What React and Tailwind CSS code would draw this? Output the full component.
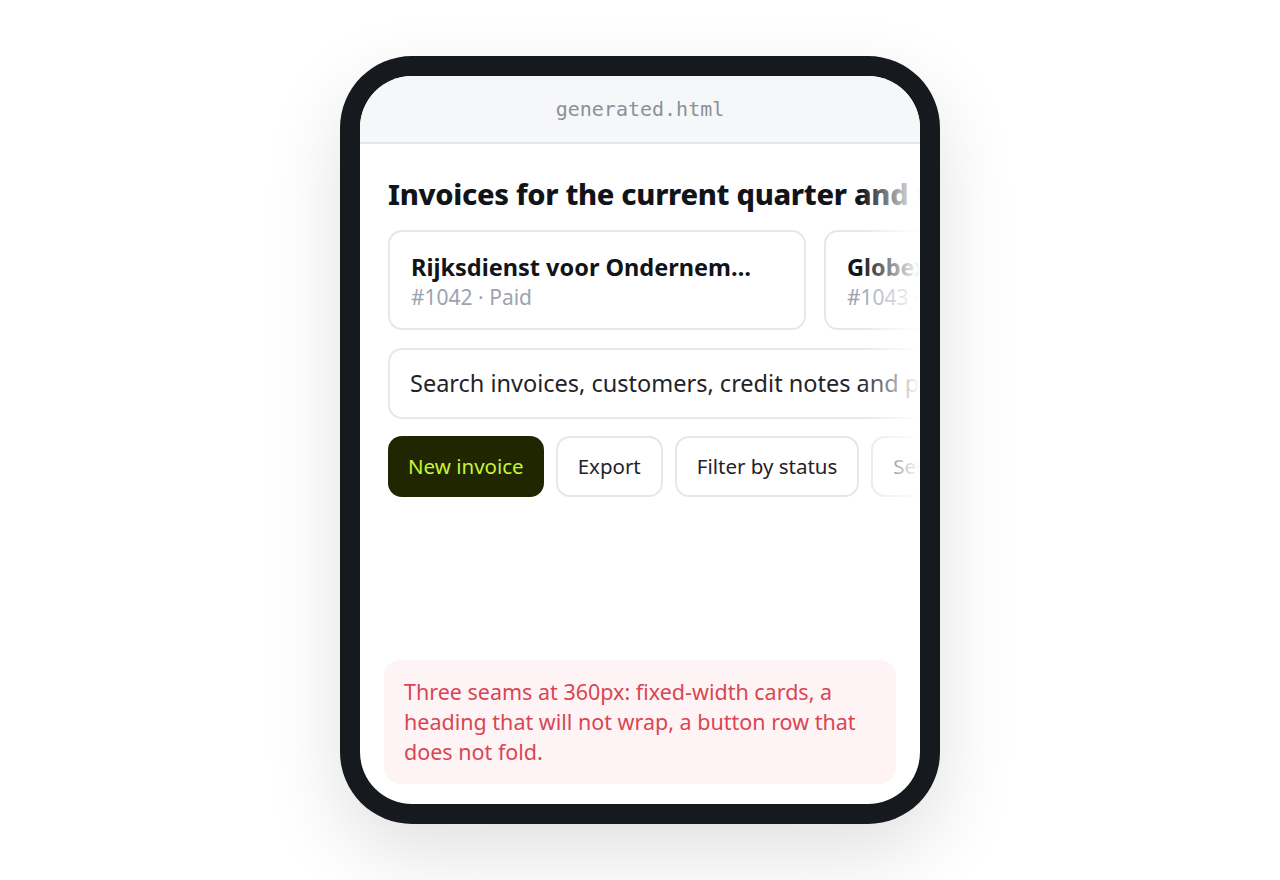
import React from "react";

const invoices = [
  { id: 1042, name: "Rijksdienst voor Ondernemend Nederland", status: "Paid" },
  { id: 1043, name: "Globex Corporation", status: "Open" },
  { id: 1044, name: "Initech B.V.", status: "Overdue" },
];

const actions = ["Export", "Filter by status", "Send reminders", "Archive"];

export default function App() {
  return (
    <div
      className="w-full h-[880px] bg-white flex items-center justify-center"
      style={{ fontFamily: '"Noto Sans", "Open Sans", sans-serif' }}
    >
      {/* phone frame */}
      <div className="w-[600px] h-[768px] rounded-[72px] bg-[#16191e] p-5 shadow-[0_30px_80px_rgba(0,0,0,0.12)]">
        <div className="w-full h-full rounded-[52px] bg-white overflow-hidden flex flex-col">
          {/* address bar */}
          <div className="h-[68px] shrink-0 bg-[#f6f7f9] border-b-2 border-[#e5e7eb] flex items-center justify-center">
            <span
              className="text-[20px] text-[#8b9099]"
              style={{ fontFamily: '"DejaVu Sans Mono", "Liberation Mono", monospace' }}
            >
              generated.html
            </span>
          </div>

          {/* page */}
          <div className="relative flex-1 flex flex-col overflow-hidden">
            <div className="pl-7 pt-[31px] flex flex-col">
              <h1 className="text-[29px] font-extrabold text-[#111418] whitespace-nowrap leading-[38px] tracking-[-0.3px]">
                Invoices for the current quarter and the previous fiscal year
              </h1>

              <div className="mt-[17px] flex gap-[18px]">
                {invoices.map((inv) => (
                  <div
                    key={inv.id}
                    className="w-[418px] shrink-0 h-[100px] rounded-[14px] border-2 border-[#e5e7eb] pl-[21px] pr-[50px] pt-[19px]"
                  >
                    <div className="text-[23.5px] font-bold text-[#111418] leading-[32px] truncate">
                      {inv.name}
                    </div>
                    <div className="text-[21px] text-[#9ca3af] leading-[29px]">
                      #{inv.id} · {inv.status}
                    </div>
                  </div>
                ))}
              </div>

              <div className="mt-[18px] w-[600px] shrink-0 h-[71px] rounded-[14px] border-2 border-[#e5e7eb] px-[20px] flex items-center">
                <span className="text-[23.5px] text-[#1f2328] whitespace-nowrap">
                  Search invoices, customers, credit notes and payments
                </span>
              </div>

              <div className="mt-[17px] flex gap-3 whitespace-nowrap">
                <button className="shrink-0 h-[61px] px-5 rounded-[14px] bg-[#1f2600] text-[#c9f33a] text-[20.5px]">
                  New invoice
                </button>
                {actions.map((a) => (
                  <button
                    key={a}
                    className="shrink-0 h-[61px] px-5 rounded-[14px] border-2 border-[#e5e7eb] bg-white text-[#1f2328] text-[20.5px]"
                  >
                    {a}
                  </button>
                ))}
              </div>
            </div>

            {/* right-edge fade */}
            <div className="pointer-events-none absolute top-0 right-0 h-[400px] w-[60px] bg-gradient-to-r from-white/0 to-white" />

            <div className="mt-auto mx-6 mb-5 rounded-[16px] bg-[#fff4f5] px-5 py-[17px]">
              <p className="text-[21.5px] leading-[30px] text-[#d94653]">
                Three seams at 360px: fixed-width cards, a heading that will not wrap, a button row that does not fold.
              </p>
            </div>
          </div>
        </div>
      </div>
    </div>
  );
}
